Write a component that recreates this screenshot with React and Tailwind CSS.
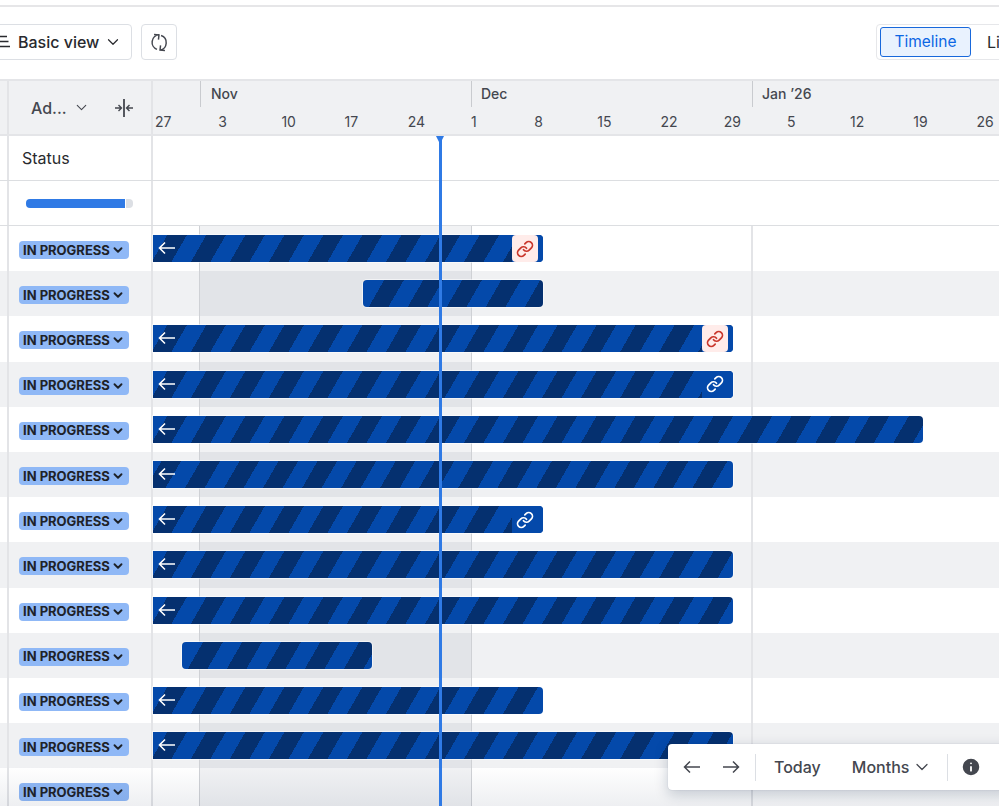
import { ChevronDown, Info, Link } from 'lucide-react'

const days = ['27', '3', '10', '17', '24', '1', '8', '15', '22', '29', '5', '12', '19', '26']

const stripeA = 'bg-[repeating-linear-gradient(120deg,#0449aa_0,#0449aa_12.4px,#05306f_12.4px,#05306f_29.3px,#0449aa_29.3px,#0449aa_33.8px)]'
const stripeB = 'bg-[repeating-linear-gradient(120deg,#05306f_0,#05306f_1.6px,#0449aa_1.6px,#0449aa_18.4px,#05306f_18.4px,#05306f_33.8px)]'
const stripeC = 'bg-[repeating-linear-gradient(120deg,#0449aa_0,#0449aa_7.4px,#05306f_7.4px,#05306f_24.3px,#0449aa_24.3px,#0449aa_33.8px)]'

const rows = [
  { bar: 'left-0 w-[390px]', stripe: stripeA, back: true, link: 'red' },
  { bar: 'left-[210px] w-[180px]', stripe: stripeB },
  { bar: 'left-0 w-[580px]', stripe: stripeA, back: true, link: 'red' },
  { bar: 'left-0 w-[580px]', stripe: stripeA, back: true, link: 'white' },
  { bar: 'left-0 w-[770px]', stripe: stripeA, back: true },
  { bar: 'left-0 w-[580px]', stripe: stripeC, back: true },
  { bar: 'left-0 w-[390px]', stripe: stripeA, back: true, link: 'white' },
  { bar: 'left-0 w-[580px]', stripe: stripeA, back: true },
  { bar: 'left-0 w-[580px]', stripe: stripeA, back: true },
  { bar: 'left-[29px] w-[190px]', stripe: stripeB },
  { bar: 'left-0 w-[390px]', stripe: stripeA, back: true },
  { bar: 'left-0 w-[580px]', stripe: stripeA, back: true },
  {},
]

function BackArrow() {
  return (
    <svg width="18" height="14" viewBox="0 0 18 14" fill="none" stroke="white" strokeWidth="1.6" className="absolute left-[5px] top-[6px]">
      <path d="M17 7H1.5M7 1.5 1.5 7 7 12.5" />
    </svg>
  )
}

function Bar({ row }) {
  return (
    <div className={`absolute top-[9px] h-[27px] rounded-r-[4px] shadow-[0_0_0_1px_rgba(255,255,255,0.55)] overflow-hidden ${row.bar} ${row.stripe} ${row.back ? '' : 'rounded-l-[4px]'}`}>
      {row.back && <BackArrow />}
      {row.link && (
        <div className="absolute right-0 top-0 h-full w-[31px] bg-[#0449aa]">
          <div className={`flex h-full w-[26px] items-center justify-center rounded-[4px] ${row.link === 'red' ? 'bg-[#ffecea]' : ''}`}>
            <Link size={18} strokeWidth={2.3} className={row.link === 'red' ? 'text-[#c9372c]' : 'text-white'} />
          </div>
        </div>
      )}
    </div>
  )
}

function Row({ row, index }) {
  return (
    <div className={`flex h-[45.2px] shrink-0 ${index % 2 === 1 ? 'bg-[#f0f1f3]' : 'bg-white'}`}>
      <div className="w-[9px] shrink-0 border-r-2 border-[#e3e4e7]" />
      <div className="flex w-[144px] shrink-0 items-center border-r-2 border-[#e3e4e7] pl-[10px] pt-[3px]">
        <span className="flex h-[18px] w-[110px] items-center rounded-[4px] bg-[#8fb8f6] pl-[4px] text-[13px] font-bold leading-none text-[#1e2228]">
          IN PROGRESS
          <ChevronDown size={14} strokeWidth={3.2} className="ml-[1px]" />
        </span>
      </div>
      <div className="relative flex flex-1">
        <div className="w-[46px]" />
        <div className="w-[272px] border-l border-[#cfd1d5] bg-[#091e420f]" />
        <div className="w-[280px] border-l border-[#cfd1d5]" />
        <div className="flex-1 border-l-2 border-[#e3e4e7]" />
        {row.bar && <Bar row={row} />}
      </div>
    </div>
  )
}

export default function App() {
  return (
    <div className="relative h-[806px] overflow-hidden bg-white font-['Inter',sans-serif] text-[#292a2e]">
      <div className="mt-[5px] flex h-[74px] items-start justify-between border-t-2 border-[#e6e6e8] pt-[17px]">
        <div className="flex gap-[9px]">
          <button className="-ml-[10px] flex h-[36px] w-[142px] items-center rounded-[4px] border border-[#dcdfe4] pl-[9px] text-[16px] font-medium">
            <svg width="12" height="16" viewBox="0 0 12 16" fill="none" stroke="currentColor" strokeWidth="1.4" className="mr-[6px]">
              <path d="M0 2.5h7M0 7.5h8.5M0 12.5h10" />
            </svg>
            Basic view
            <ChevronDown size={18} strokeWidth={1.6} className="ml-[5px]" />
          </button>
          <button className="flex h-[36px] w-[36px] items-center justify-center rounded-[4px] border border-[#dcdfe4]">
            <svg width="21" height="21" viewBox="0 0 20 20" fill="none" stroke="#44474f" strokeWidth="1.4">
              <path d="M9.5 2.7A7.2 7.2 0 0 0 7.6 16.6M4.8 2.4 9.5 2.7 9 7.2" />
              <path d="M11.5 3.4A7.2 7.2 0 0 1 10.5 17.3M15.2 17.7 10.5 17.3 11 12.8" />
            </svg>
          </button>
        </div>
        <div className="-mr-[40px] flex h-[36px] w-[163px] items-center gap-[16px] rounded-[4px] border border-[#e6e7ea] pl-[3px]">
          <span className="flex h-[30px] w-[91px] items-center justify-center rounded-[3px] border-[1.5px] border-[#1868db] bg-[#e9f2fe] text-[15.5px] text-[#0c66e4]">Timeline</span>
          <span className="text-[16px]">Li</span>
        </div>
      </div>

      <div className="flex h-[57px] border-y-2 border-[#e4e5e8] bg-[#f0f1f3] text-[#44474f]">
        <div className="w-[9px] shrink-0 border-r-2 border-[#e3e4e7]" />
        <div className="flex w-[144px] shrink-0 items-center border-r-2 border-[#e3e4e7] pl-[22px]">
          <span className="text-[16px] font-medium">Ad...</span>
          <ChevronDown size={17} strokeWidth={1.5} className="ml-[6px]" />
          <svg width="20" height="20" viewBox="0 0 20 20" fill="none" stroke="currentColor" strokeWidth="1.4" className="ml-[24px]">
            <path d="M10 1v18" strokeWidth="1.8" />
            <path d="M1 10h6.5M4.5 7l3 3-3 3M19 10h-6.5M15.5 7l-3 3 3 3" />
          </svg>
        </div>
        <div className="flex-1">
          <div className="flex h-[26px] text-[14px] font-medium">
            <div className="w-[47px]" />
            <div className="w-[271px] border-l border-[#c9cbcf] pl-[10px] pt-[2px]">Nov</div>
            <div className="w-[281px] border-l border-[#c9cbcf] pl-[9px] pt-[2px]">Dec</div>
            <div className="flex-1 border-l border-[#c9cbcf] pl-[9px] pt-[2px]">Jan ’26</div>
          </div>
          <div className="flex pl-[2px] text-[14px]">
            {days.map((d) => (
              <div key={d} className="w-[63.2px] shrink-0 pt-[4px]">{d}</div>
            ))}
          </div>
        </div>
      </div>

      <div className="flex h-[45px] border-b border-[#dcdee1]">
        <div className="w-[9px] shrink-0 border-r-2 border-[#e3e4e7]" />
        <div className="flex w-[144px] shrink-0 items-center border-r-2 border-[#e3e4e7] pl-[13px] text-[16px]">Status</div>
      </div>
      <div className="flex h-[45px] border-b border-[#dcdee1]">
        <div className="w-[9px] shrink-0 border-r-2 border-[#e3e4e7]" />
        <div className="flex w-[144px] shrink-0 items-center gap-px border-r-2 border-[#e3e4e7] pl-[17px]">
          <div className="h-[9px] w-[99px] rounded-l-[4px] bg-[#2f7ae5]" />
          <div className="h-[9px] w-[7px] rounded-r-[4px] bg-[#dcdfe4]" />
        </div>
      </div>

      {rows.map((row, i) => (
        <Row key={i} row={row} index={i} />
      ))}

      <div className="absolute bottom-0 left-0 right-0 h-[40px] bg-linear-to-b from-transparent to-[#091e4212]" />

      <div className="absolute bottom-0 left-[439px] top-[136px] w-[2.5px] bg-[#2f7ae5]" />
      <div className="absolute left-[436px] top-[136px] h-0 w-0 border-x-[4.5px] border-t-[8px] border-x-transparent border-t-[#2f7ae5]" />

      <div className="absolute left-[668px] top-[744px] flex h-[46px] w-[345px] items-center rounded-[4px] bg-white text-[16px] font-medium text-[#44474f] shadow-[0_4px_14px_rgba(9,30,66,0.22),0_0_1px_rgba(9,30,66,0.3)]">
        <svg width="18" height="14" viewBox="0 0 18 14" fill="none" stroke="currentColor" strokeWidth="1.5" className="ml-[15px]">
          <path d="M17 7H1.5M7 1.5 1.5 7 7 12.5" />
        </svg>
        <svg width="18" height="14" viewBox="0 0 18 14" fill="none" stroke="currentColor" strokeWidth="1.5" className="ml-[21px]">
          <path d="M1 7h15.5M11 1.5 16.5 7 11 12.5" />
        </svg>
        <div className="ml-[15px] h-[27px] w-px bg-[#dcdfe4]" />
        <span className="ml-[18px]">Today</span>
        <span className="ml-[31px]">Months</span>
        <ChevronDown size={20} strokeWidth={1.5} className="ml-[3px]" />
        <div className="ml-[15px] h-[27px] w-px bg-[#dcdfe4]" />
        <Info size={22} fill="currentColor" stroke="white" strokeWidth={2} className="ml-[12px]" />
      </div>
    </div>
  )
}
